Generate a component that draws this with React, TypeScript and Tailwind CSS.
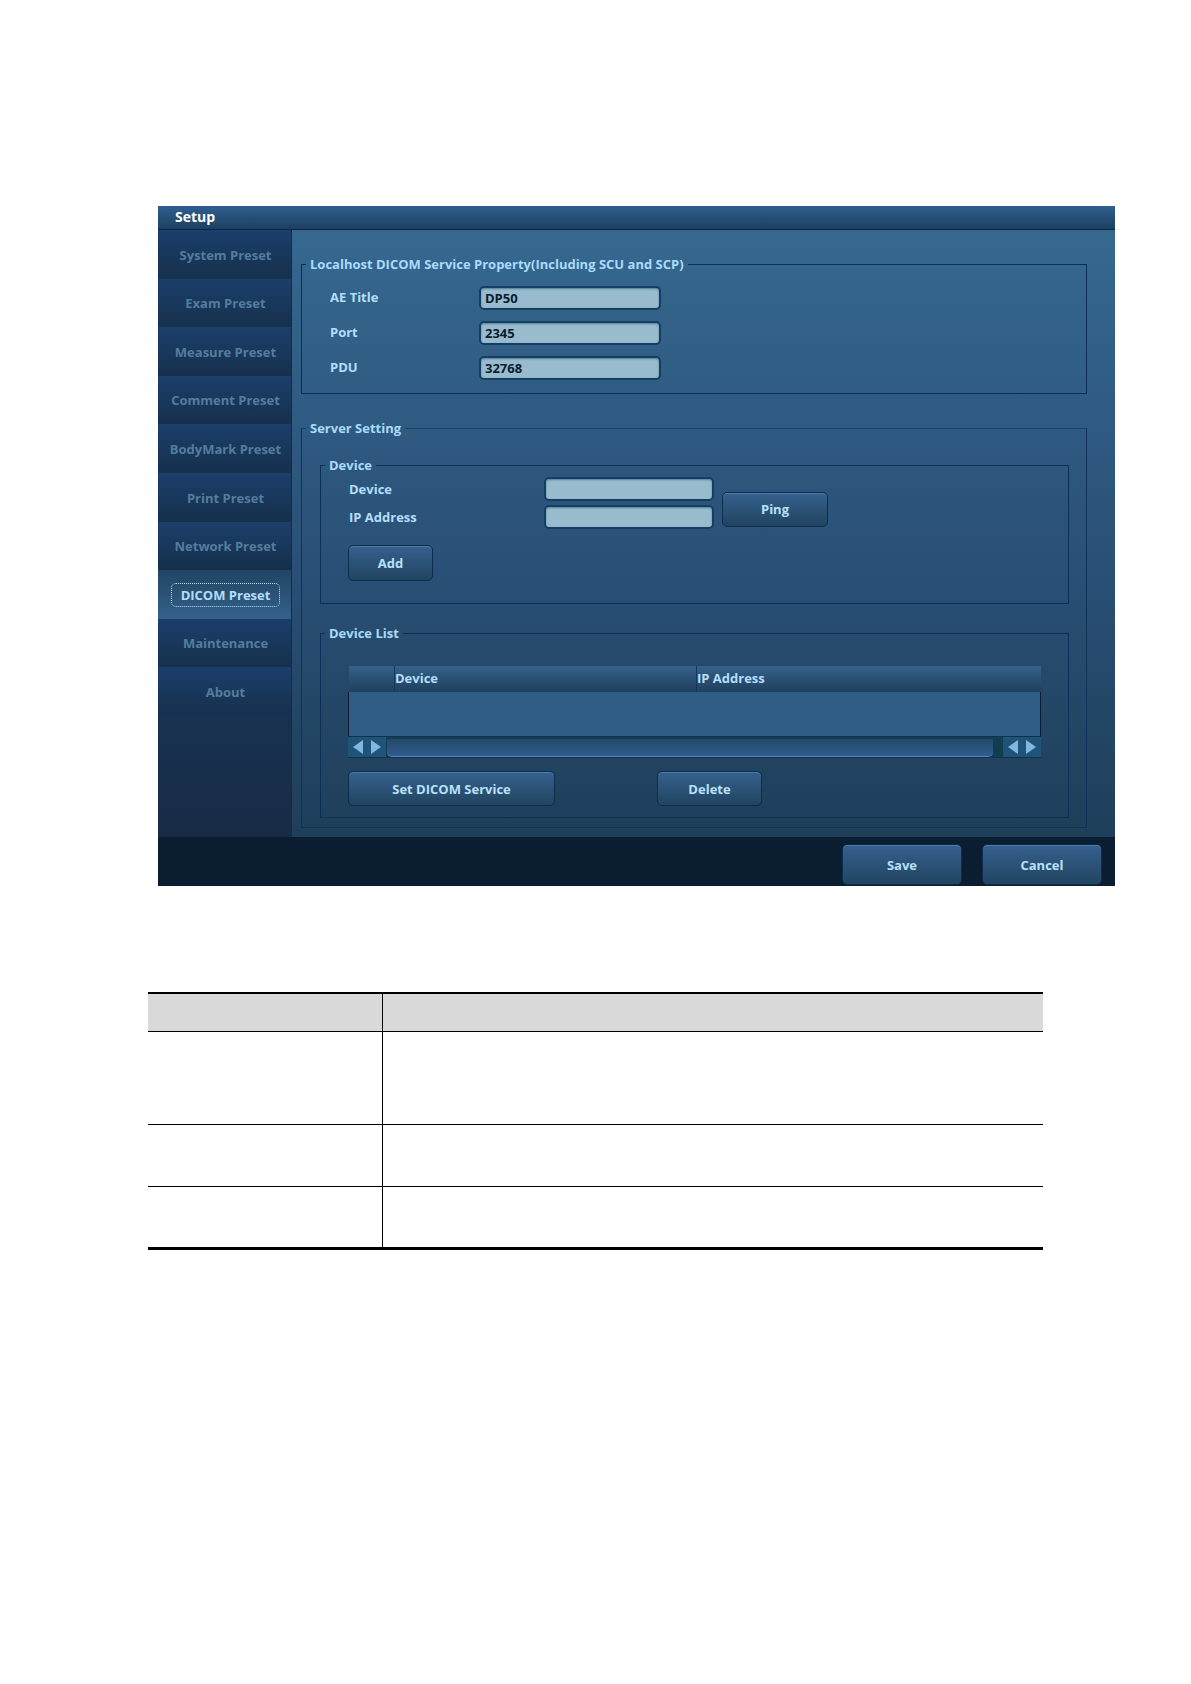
import { useState } from 'react'
import type { ReactNode } from 'react'

const presets = [
  'System Preset',
  'Exam Preset',
  'Measure Preset',
  'Comment Preset',
  'BodyMark Preset',
  'Print Preset',
  'Network Preset',
  'DICOM Preset',
  'Maintenance',
  'About',
]

const hostFields = [
  { id: 'ae-title', label: 'AE Title', value: 'DP50' },
  { id: 'port', label: 'Port', value: '2345' },
  { id: 'pdu', label: 'PDU', value: '32768' },
]

const deviceFields = [
  { id: 'device', label: 'Device' },
  { id: 'ip-address', label: 'IP Address' },
]

const inputClass =
  'h-6 rounded-[5px] border-2 border-[#123f63] bg-[#98bbcd] px-1 text-[#0b1d2e] shadow-[inset_0_1px_2px_#4f7f96] outline-none'

function Button({ className, children }: { className: string; children: ReactNode }) {
  return (
    <button
      type="button"
      className={`rounded-[5px] border border-[#0c2d4d] bg-linear-to-b from-[#36618f] to-[#214460] pt-0.5 text-[#b9e1fa] shadow-[inset_0_1px_0_#4c7ba6] ${className}`}
    >
      {children}
    </button>
  )
}

type GroupProps = { title: string; className: string; bodyClass: string; children: ReactNode }

function Group({ title, className, bodyClass, children }: GroupProps) {
  return (
    <fieldset className={`min-w-0 border ${className}`}>
      <legend className="ml-1 px-1 leading-5 text-[#a9dcfb]">{title}</legend>
      <div className={bodyClass}>{children}</div>
    </fieldset>
  )
}

function ScrollArrows() {
  return (
    <div className="flex w-[38px] items-center justify-center gap-2 bg-[#1f5478]">
      <button type="button" aria-label="Scroll left">
        <svg width="10" height="14" viewBox="0 0 10 14" fill="#7fb9e0"><path d="M10 0v14L0 7z" /></svg>
      </button>
      <button type="button" aria-label="Scroll right">
        <svg width="10" height="14" viewBox="0 0 10 14" fill="#7fb9e0"><path d="M0 0v14l10-7z" /></svg>
      </button>
    </div>
  )
}

export default function App() {
  const [active, setActive] = useState('DICOM Preset')

  return (
    <div className="min-h-screen bg-white pt-[206px] font-['Open_Sans','Noto_Sans',sans-serif] text-[13px] font-bold">
      <main className="mr-[76px] ml-[158px]">
        {/* Title bar */}
        <header className="h-6 border-b border-[#082848] bg-linear-to-b from-[#2f5f91] to-[#1d4061] pl-[17px]">
          <h1 className="text-sm leading-[22px] font-bold text-white">Setup</h1>
        </header>

        <div className="flex">
          {/* Sidebar */}
          <nav className="w-[134px] shrink-0 border-r border-[#0c2f50] bg-linear-to-b from-[#173250] from-80% to-[#182b46]">
            <ul className="grid h-[486px] grid-rows-10">
              {presets.map((preset) => (
                <li key={preset} className="flex">
                  <button
                    type="button"
                    onClick={() => setActive(preset)}
                    className={
                      preset === active
                        ? 'flex flex-1 items-center justify-center bg-linear-to-b from-[#214563] to-[#36618a] pt-0.5 pl-0.5 text-[#b3dffb]'
                        : 'flex-1 bg-linear-to-b from-[#1b3f6b] to-[#16304c] pt-0.5 pl-0.5 text-[#547d9d]'
                    }
                  >
                    {preset === active ? (
                      <span className="rounded-[5px] border border-dotted border-[#b3dffb] px-[9px] leading-[22px]">{preset}</span>
                    ) : (
                      preset
                    )}
                  </button>
                </li>
              ))}
            </ul>
          </nav>

          <section className="min-w-0 flex-1 bg-linear-to-b from-[#36688f] via-[#2a5077] via-55% to-[#1e3f59] pt-6 pr-7 pb-[9px] pl-[9px]">
            <Group
              title="Localhost DICOM Service Property(Including SCU and SCP)"
              className="border-[#0a2f58]"
              bodyClass="flex flex-col gap-[11px] pt-3 pb-[13px] pl-7"
            >
              {hostFields.map((field) => (
                <div key={field.id} className="flex">
                  <label htmlFor={field.id} className="w-[149px] leading-[22px] text-[#b3dffb]">{field.label}</label>
                  <input id={field.id} defaultValue={field.value} className={`w-[182px] ${inputClass}`} />
                </div>
              ))}
            </Group>

            <Group
              title="Server Setting"
              className="mt-6 border-[#0f3358] border-t-[#1a426b]"
              bodyClass="pt-[17px] pr-[17px] pb-[9px] pl-[18px]"
            >
              <Group title="Device" className="border-[#0a2f58]" bodyClass="pt-0.5 pr-7 pb-[22px] pl-[27px]">
                <div className="flex items-center gap-2">
                  <div className="flex flex-col gap-1">
                    {deviceFields.map((field) => (
                      <div key={field.id} className="flex items-center">
                        <label htmlFor={field.id} className="w-[196px] pl-px leading-6 text-[#b3dffb]">{field.label}</label>
                        <input id={field.id} className={`w-[170px] ${inputClass}`} />
                      </div>
                    ))}
                  </div>
                  <Button className="mt-3 h-[35px] w-[106px]">Ping</Button>
                </div>
                <Button className="mt-4 h-9 w-[85px]">Add</Button>
              </Group>

              <Group title="Device List" className="mt-[19px] border-[#0a2f58]" bodyClass="pt-[23px] pr-[27px] pb-[11px] pl-[27px]">
                <table className="w-full table-fixed border-collapse text-left text-[#b3dffb]">
                  <thead>
                    <tr className="h-[26px] bg-linear-to-b from-[#35618a] to-[#1f405e]">
                      <th aria-label="Selected" className="w-[46px]" />
                      <th className="w-[302px] border-l border-[#15375a]">Device</th>
                      <th className="border-l border-[#15375a]">IP Address</th>
                    </tr>
                  </thead>
                  <tbody>
                    <tr className="h-11 bg-[#305d86]">
                      <td colSpan={3} className="border-x border-[#0b1b33]" />
                    </tr>
                  </tbody>
                </table>
                <div className="flex h-[22px] border-y border-[#0c3350] bg-[#174461]">
                  <ScrollArrows />
                  <div className="flex flex-1 bg-[#123c50] pt-0.5 pr-2.5 pl-px">
                    <div className="flex-1 rounded-b-[5px] border-b border-[#5585b0] bg-linear-to-b from-[#23486a] to-[#315c8e]" />
                  </div>
                  <ScrollArrows />
                </div>
                <div className="mt-[13px] flex gap-[102px]">
                  <Button className="h-[35px] w-[207px]">Set DICOM Service</Button>
                  <Button className="h-[35px] w-[105px]">Delete</Button>
                </div>
              </Group>
            </Group>
          </section>
        </div>

        <footer className="flex h-[49px] justify-end gap-5 bg-[#0b1d31] pt-[7px] pr-[13px]">
          <Button className="h-[41px] w-[120px]">Save</Button>
          <Button className="h-[41px] w-[120px]">Cancel</Button>
        </footer>
      </main>

      {/* Parameter descriptions, left blank */}
      <div className="mt-[106px] mr-[148px] ml-[148px]">
        <table className="w-full table-fixed border-separate border-spacing-0 border-t-2 border-b-3 border-black">
          <thead>
            <tr className="h-[38px] bg-[#d9d9d9]">
              <th className="w-[235px] border-r border-b border-black" />
              <th className="border-b border-black" />
            </tr>
          </thead>
          <tbody>
            <tr className="h-[93px]">
              <td className="border-r border-b border-black" />
              <td className="border-b border-black" />
            </tr>
            <tr className="h-[62px]">
              <td className="border-r border-b border-black" />
              <td className="border-b border-black" />
            </tr>
            <tr className="h-[60px]">
              <td className="border-r border-black" />
              <td />
            </tr>
          </tbody>
        </table>
      </div>
    </div>
  )
}
